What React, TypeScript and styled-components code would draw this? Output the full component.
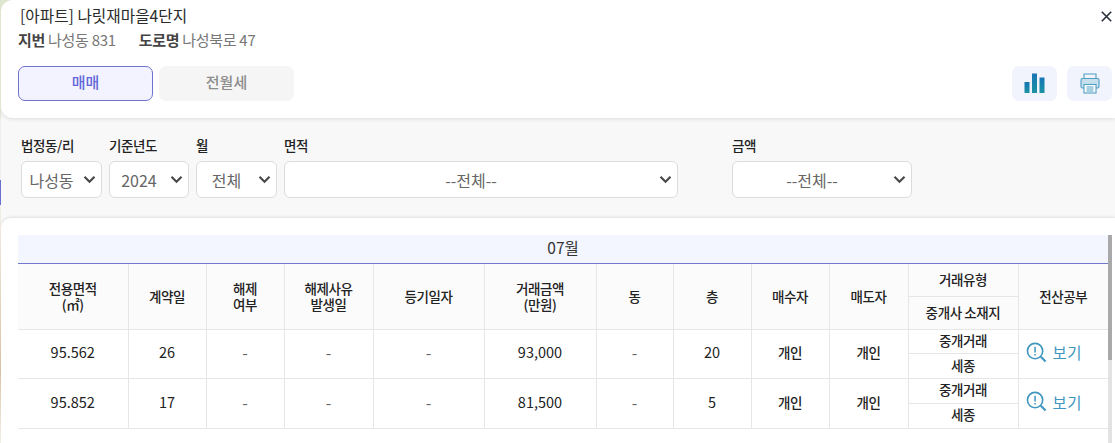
import styled, { createGlobalStyle } from "styled-components";

const FONT = `"Noto Sans CJK KR", "Noto Sans", sans-serif`;

const GlobalStyle = createGlobalStyle`
  html, body {
    margin: 0;
    padding: 0;
    height: 100%;
    overflow: hidden;
    background: linear-gradient(
      to bottom,
      #dfe6cf 0,
      #dfe6cf 118px,
      #eeeeee 118px,
      #eeeeee 180px,
      #6a6fd0 180px,
      #6a6fd0 205px,
      #f2efe9 205px,
      #d9c2a4 370px,
      #f2efe9 443px
    );
    font-family: ${FONT};
  }
`;

const FILTERS = [
  { label: "법정동/리", value: "나성동", width: 81 },
  { label: "기준년도", value: "2024", width: 80 },
  { label: "월", value: "전체", width: 81 },
  { label: "면적", value: "--전체--", width: 394 },
];

const ROWS = [
  { area: "95.562", day: "26", amount: "93,000", floor: "20" },
  { area: "95.852", day: "17", amount: "81,500", floor: "5" },
];

const COLUMN_WIDTHS = [110, 78, 78, 89, 111, 112, 77, 78, 78, 79, 110, 90];

function ChevronIcon() {
  return (
    <svg width="13" height="9" viewBox="0 0 13 9" fill="none">
      <path d="M1.5 1.8 6.5 6.8 11.5 1.8" stroke="#4a4a4a" strokeWidth="2.2" />
    </svg>
  );
}

function ChartIcon() {
  return (
    <svg width="21" height="21" viewBox="0 0 21 21">
      <defs>
        <linearGradient id="bars" x1="0" y1="0" x2="0" y2="1">
          <stop offset="0" stopColor="#1674b4" />
          <stop offset="1" stopColor="#1b93a4" />
        </linearGradient>
      </defs>
      <rect x="0.5" y="9" width="5" height="11" fill="url(#bars)" />
      <rect x="8" y="0.5" width="5" height="19.5" fill="url(#bars)" />
      <rect x="15.5" y="4.5" width="5" height="15.5" fill="url(#bars)" />
    </svg>
  );
}

function PrintIcon() {
  return (
    <svg width="20" height="21" viewBox="0 0 20 21" fill="none" stroke="#4f9fc4" strokeWidth="1.1">
      <path d="M4 5.5V1h12v4.5" />
      <rect x="1" y="5.5" width="18" height="9.5" rx="1.5" fill="#c5e0ec" />
      <rect x="4" y="11.5" width="12" height="8.5" fill="#fff" />
      <path d="M6.5 14h7M6.5 16h7M6.5 18h7" />
    </svg>
  );
}

function ReportIcon() {
  return (
    <svg width="21" height="21" viewBox="0 0 22 22" fill="none" stroke="#3f97c0">
      <circle cx="9.5" cy="9.5" r="8" strokeWidth="1.7" />
      <path d="M15.5 15.5 20.5 20.5" strokeWidth="2.2" />
      <path d="M9.5 5v6" strokeWidth="1.6" />
      <path d="M9.5 12.6v1.6" strokeWidth="1.6" />
    </svg>
  );
}

function FilterSelect({ label, value, width }: { label: string; value: string; width: number }) {
  return (
    <Filter $width={width}>
      <FilterLabel>{label}</FilterLabel>
      <SelectWrap>
        <Select defaultValue={value}>
          <option>{value}</option>
        </Select>
        <Chevron>
          <ChevronIcon />
        </Chevron>
      </SelectWrap>
    </Filter>
  );
}

export default function App() {
  return (
    <Page>
      <GlobalStyle />
      <Header>
        <TitleRow>
          <Title>[아파트] 나릿재마을4단지</Title>
          <CloseButton aria-label="닫기">
            <svg width="11" height="11" viewBox="0 0 11 11" fill="none">
              <path d="M.8.8l9.4 9.4M10.2.8.8 10.2" stroke="#29303a" strokeWidth="1.6" />
            </svg>
          </CloseButton>
        </TitleRow>
        <Address>
          <AddressItem>
            <b>지번</b> 나성동 831
          </AddressItem>
          <AddressItem>
            <b>도로명</b> 나성북로 47
          </AddressItem>
        </Address>
        <ActionRow>
          <Tabs>
            <Tab $active>매매</Tab>
            <Tab>전월세</Tab>
          </Tabs>
          <Tools>
            <ToolButton aria-label="차트">
              <ChartIcon />
            </ToolButton>
            <ToolButton aria-label="인쇄">
              <PrintIcon />
            </ToolButton>
          </Tools>
        </ActionRow>
      </Header>

      <Filters>
        {FILTERS.map((filter) => (
          <FilterSelect key={filter.label} {...filter} />
        ))}
        <AmountFilter>
          <FilterSelect label="금액" value="--전체--" width={180} />
        </AmountFilter>
      </Filters>

      <TableCard>
        <TableScroll>
          <Table>
            <colgroup>
              {COLUMN_WIDTHS.map((width, index) => (
                <col key={index} style={{ width }} />
              ))}
            </colgroup>
            <thead>
              <tr>
                <MonthCell colSpan={12}>07월</MonthCell>
              </tr>
              <tr>
                <HeadCell rowSpan={2}>
                  전용면적
                  <br />
                  (㎡)
                </HeadCell>
                <HeadCell rowSpan={2}>계약일</HeadCell>
                <HeadCell rowSpan={2}>
                  해제
                  <br />
                  여부
                </HeadCell>
                <HeadCell rowSpan={2}>
                  해제사유
                  <br />
                  발생일
                </HeadCell>
                <HeadCell rowSpan={2}>등기일자</HeadCell>
                <HeadCell rowSpan={2}>
                  거래금액
                  <br />
                  (만원)
                </HeadCell>
                <HeadCell rowSpan={2}>동</HeadCell>
                <HeadCell rowSpan={2}>층</HeadCell>
                <HeadCell rowSpan={2}>매수자</HeadCell>
                <HeadCell rowSpan={2}>매도자</HeadCell>
                <HeadCell>거래유형</HeadCell>
                <HeadCell rowSpan={2}>전산공부</HeadCell>
              </tr>
              <tr>
                <HeadCell>중개사 소재지</HeadCell>
              </tr>
            </thead>
            <tbody>
              {ROWS.map((row) => (
                <RowGroup key={row.area} {...row} />
              ))}
            </tbody>
          </Table>
        </TableScroll>
        <Scrollbar>
          <ScrollThumb />
        </Scrollbar>
      </TableCard>
    </Page>
  );
}

function RowGroup({ area, day, amount, floor }: { area: string; day: string; amount: string; floor: string }) {
  return (
    <>
      <tr>
        <BodyCell rowSpan={2}>{area}</BodyCell>
        <BodyCell rowSpan={2}>{day}</BodyCell>
        <DashCell rowSpan={2}>-</DashCell>
        <DashCell rowSpan={2}>-</DashCell>
        <DashCell rowSpan={2}>-</DashCell>
        <BodyCell rowSpan={2}>{amount}</BodyCell>
        <DashCell rowSpan={2}>-</DashCell>
        <BodyCell rowSpan={2}>{floor}</BodyCell>
        <SubCell rowSpan={2}>개인</SubCell>
        <SubCell rowSpan={2}>개인</SubCell>
        <SubCell>중개거래</SubCell>
        <BodyCell rowSpan={2}>
          <ViewLink>
            <ReportIcon />
            보기
          </ViewLink>
        </BodyCell>
      </tr>
      <tr>
        <SubCell>세종</SubCell>
      </tr>
    </>
  );
}

const Page = styled.div`
  width: 1114px;
  height: 443px;
  margin-left: 1px;
  background: #f8f8f8;
  border-radius: 12px 0 0 0;
  display: flex;
  flex-direction: column;
  overflow: hidden;
  color: #222;
`;

const Header = styled.header`
  height: 118px;
  flex: none;
  box-sizing: border-box;
  padding: 4px 3px 0 17px;
  background: #fff;
  border-radius: 0 0 0 12px;
  box-shadow: 0 1px 4px rgba(0, 0, 0, 0.12);
  display: flex;
  flex-direction: column;
`;

const TitleRow = styled.div`
  display: flex;
  align-items: center;
  justify-content: space-between;
  height: 22px;
  padding-left: 2px;
`;

const Title = styled.h1`
  margin: 0;
  font-size: 15.7px;
  font-weight: 400;
  color: #2b2b2b;
`;

const CloseButton = styled.button`
  border: 0;
  padding: 2px 0 0;
  background: none;
  display: flex;
`;

const Address = styled.div`
  display: flex;
  gap: 23px;
  margin-top: 1px;
  height: 24px;
  align-items: center;
  font-size: 15px;
  color: #777;

  b {
    font-weight: 700;
    color: #444;
  }
`;

const AddressItem = styled.span`
  letter-spacing: -0.3px;
`;

const ActionRow = styled.div`
  display: flex;
  justify-content: space-between;
  margin-top: 15px;
`;

const Tabs = styled.div`
  display: flex;
  gap: 6px;
`;

const Tab = styled.button<{ $active?: boolean }>`
  width: 135px;
  height: 35px;
  box-sizing: border-box;
  padding: 0 0 4px;
  border-radius: 7px;
  font-family: ${FONT};
  font-size: 15px;
  font-weight: 500;
  border: 1px solid ${(p) => (p.$active ? "#6f72cf" : "#f5f5f5")};
  background: ${(p) => (p.$active ? "#f2f3ff" : "#f5f5f5")};
  color: ${(p) => (p.$active ? "#6266d8" : "#8c8c8c")};
`;

const Tools = styled.div`
  display: flex;
  gap: 10px;
`;

const ToolButton = styled.button`
  width: 45px;
  height: 35px;
  border: 0;
  padding: 0;
  border-radius: 7px;
  background: #f1f3fd;
  display: flex;
  align-items: center;
  justify-content: center;
`;

const Filters = styled.section`
  height: 100px;
  flex: none;
  box-sizing: border-box;
  padding: 17px 0 0 20px;
  display: flex;
  gap: 7px;
`;

const Filter = styled.div<{ $width: number }>`
  width: ${(p) => p.$width}px;
  display: flex;
  flex-direction: column;
  gap: 6px;
`;

const AmountFilter = styled.div`
  margin-left: 47px;
`;

const FilterLabel = styled.label`
  height: 20px;
  line-height: 20px;
  font-size: 13.5px;
  font-weight: 500;
  letter-spacing: -0.4px;
  color: #222;
`;

const SelectWrap = styled.div`
  position: relative;
  height: 37px;
`;

const Select = styled.select`
  appearance: none;
  width: 100%;
  height: 100%;
  box-sizing: border-box;
  padding: 0 20px 0 0;
  border: 1px solid #dcdcdc;
  border-radius: 6px;
  background: #fff;
  font-family: ${FONT};
  font-size: 16px;
  color: #666;
  text-align: center;
  text-align-last: center;
`;

const Chevron = styled.span`
  position: absolute;
  top: 14px;
  right: 6px;
  display: flex;
  pointer-events: none;
`;

const TableCard = styled.section`
  flex: 1;
  display: flex;
  box-sizing: border-box;
  padding: 17px 0 0 17px;
  background: #fff;
  border-radius: 10px 0 0 0;
  box-shadow: 0 -1px 3px rgba(0, 0, 0, 0.1);
`;

const TableScroll = styled.div`
  width: 1090px;
  flex: none;
`;

const Table = styled.table`
  width: 1090px;
  table-layout: fixed;
  border-collapse: collapse;
  font-size: 13px;
  color: #222;
`;

const MonthCell = styled.th`
  height: 28px;
  padding: 0 0 3px;
  box-sizing: border-box;
  background: #f3f6fe;
  border-bottom: 1px solid #7378cf;
  font-size: 15.5px;
  font-weight: 400;
  color: #333;
`;

const HeadCell = styled.th`
  padding: 0 0 1px;
  height: 33px;
  box-sizing: border-box;
  background: #fbfbfb;
  border: 1px solid #e6e6e6;
  border-top: 0;
  font-size: 13.5px;
  font-weight: 500;
  line-height: 16px;
  letter-spacing: -0.4px;

  &:first-child {
    border-left: 0;
  }

  &:last-child {
    border-right: 0;
  }
`;

const BodyCell = styled.td`
  padding: 0 0 3px;
  height: 24.75px;
  box-sizing: border-box;
  line-height: 20px;
  text-align: center;
  border: 1px solid #e6e6e6;
  font-size: 14.5px;
  color: #222;

  &:first-child {
    border-left: 0;
  }

  &:last-child {
    border-right: 0;
  }
`;

const DashCell = styled(BodyCell)`
  font-size: 16px;
  color: #666;
`;

const SubCell = styled(BodyCell)`
  font-size: 13.5px;
  font-weight: 500;
  letter-spacing: -0.4px;
`;

const ViewLink = styled.span`
  display: flex;
  align-items: center;
  gap: 6px;
  padding-left: 7px;
  font-size: 15.5px;
  color: #3f97c0;
  letter-spacing: 0.5px;
`;

const Scrollbar = styled.div`
  width: 4px;
  flex: none;
  background: #e2e2e2;
`;

const ScrollThumb = styled.div`
  height: 125px;
  background: #a9a9a9;
`;
